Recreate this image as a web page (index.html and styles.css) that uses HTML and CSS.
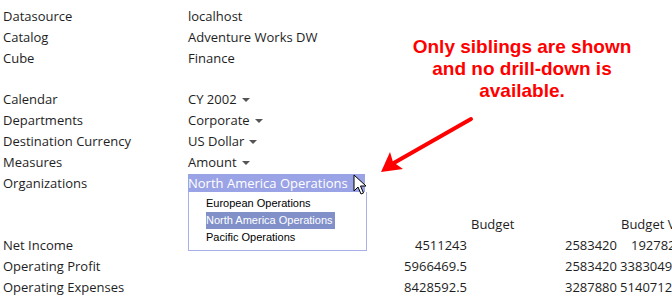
FILE: index.html
```html
<!DOCTYPE html>
<html lang="en">

<head>
  <meta charset="UTF-8" />
  <meta name="viewport" content="width=device-width, initial-scale=1.0" />
  <title>Report Parameters</title>
  <link rel="stylesheet" href="styles.css">
</head>

<body>
  <div class="page">
    <div class="info">
      <div class="label">Datasource</div>
      <div class="value">localhost</div>
      <div class="label">Catalog</div>
      <div class="value">Adventure Works DW</div>
      <div class="label">Cube</div>
      <div class="value">Finance</div>
      <div class="spacer"></div>
      <div class="label">Calendar</div>
      <div class="value">CY 2002<span class="caret"></span></div>
      <div class="label">Departments</div>
      <div class="value">Corporate<span class="caret"></span></div>
      <div class="label">Destination Currency</div>
      <div class="value">US Dollar<span class="caret"></span></div>
      <div class="label">Measures</div>
      <div class="value">Amount<span class="caret"></span></div>
      <div class="label">Organizations</div>
      <div class="value picker">
        <span class="picked">North America Operations<span class="caret light"></span></span>
        <div class="menu">
          <div class="item">European Operations</div>
          <div class="item"><span class="hot">North America Operations</span></div>
          <div class="item">Pacific Operations</div>
        </div>
        <svg class="cursor" width="14" height="22" viewBox="0 0 14 22">
          <path d="M1 1 L1 17 L5 13 L8 20 L10.5 19 L7.5 12 L13 12 Z" fill="#fff" stroke="#000" stroke-width="1" stroke-linejoin="round" />
        </svg>
      </div>
    </div>

    <div class="grid">
      <div></div>
      <div></div>
      <div class="head">Budget</div>
      <div class="head">Budget Variance</div>

      <div class="label">Net Income</div>
      <div class="num">4511243</div>
      <div class="num">2583420</div>
      <div class="num">1927823</div>

      <div class="label">Operating Profit</div>
      <div class="num">5966469.5</div>
      <div class="num">2583420</div>
      <div class="num">3383049.5</div>

      <div class="label">Operating Expenses</div>
      <div class="num">8428592.5</div>
      <div class="num">3287880</div>
      <div class="num">5140712.5</div>
    </div>
  </div>

  <div class="note">Only siblings are shown and no drill-down is available.</div>
  <svg class="pointer" width="672" height="298" viewBox="0 0 672 298">
    <line x1="471" y1="119" x2="392" y2="164" stroke="#f00" stroke-width="4" stroke-linecap="round" />
    <path d="M381 172 L390 152 L393 162 L403 169 Z" fill="#f00" />
  </svg>
</body>

</html>
```

FILE: styles.css
```css
:root {
  --text: #1e1e1e;
  --pick: #9aa3e5;
  --menu-border: #a8afea;
  --hot: #8190c9;
}

body {
  margin: 0;
  overflow: hidden;
  font-family: 'Open Sans', sans-serif;
  font-size: 13px;
  color: var(--text);
  background: #fff;
}

.page {
  padding: 5px 0 0 3px;
}

.info {
  display: grid;
  grid-template-columns: 185px 1fr;
  grid-template-rows: repeat(3, 21px) 20px;
  grid-auto-rows: 21px;
  align-items: center;
}

.spacer {
  grid-column: 1 / 3;
}

.caret {
  display: inline-block;
  width: 0;
  height: 0;
  margin-left: 5px;
  vertical-align: middle;
  border-left: 4px solid transparent;
  border-right: 4px solid transparent;
  border-top: 4px solid #555;
}

.caret.light {
  border-top-color: #fff;
  margin-left: 7px;
}

.picker {
  position: relative;
  height: 21px;
  display: flex;
  align-items: center;
}

.picked {
  display: inline-block;
  width: 177px;
  height: 18px;
  line-height: 18px;
  background: var(--pick);
  color: #fff;
  white-space: nowrap;
}

.menu {
  position: absolute;
  left: 0;
  top: 20px;
  padding: 3px 0 4px 17px;
  width: 160px;
  border: 1px solid var(--menu-border);
  border-top: none;
  background: #fff;
  font-family: 'Liberation Sans', Arial, sans-serif;
  font-size: 11px;
  color: #000;
  z-index: 2;
}

.item {
  height: 17px;
  line-height: 17px;
  white-space: nowrap;
}

.hot {
  display: inline-block;
  background: var(--hot);
  color: #fff;
  padding-right: 2px;
}

.cursor {
  position: absolute;
  left: 165px;
  top: 2px;
  z-index: 3;
}

.grid {
  display: grid;
  grid-template-columns: 364px 100px 150px 66px;
  grid-auto-rows: 21px;
  align-items: center;
  margin-top: 20px;
  width: 700px;
}

.head {
  padding-left: 4px;
  white-space: nowrap;
}

.num {
  text-align: right;
  white-space: nowrap;
}

.note {
  position: absolute;
  left: 400px;
  top: 36px;
  width: 244px;
  text-align: center;
  font-family: 'Liberation Sans', Arial, sans-serif;
  font-weight: bold;
  font-size: 19px;
  line-height: 22px;
  color: #f00;
}

.pointer {
  position: absolute;
  left: 0;
  top: 0;
  pointer-events: none;
}
```
